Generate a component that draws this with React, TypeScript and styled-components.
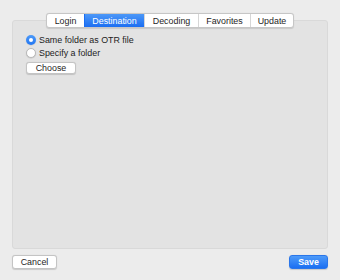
import React from "react";
import styled, { createGlobalStyle } from "styled-components";

const Global = createGlobalStyle`
  html, body { margin: 0; padding: 0; background: #ececec; }
  * { box-sizing: border-box; }
  body { font-family: "Liberation Sans", Arial, sans-serif; }
`;

const Window = styled.div`
  width: 340px;
  height: 280px;
  padding: 0 12px;
  display: flex;
  flex-direction: column;
  background: #ececec;
  color: #1d1d1d;
  font-size: 8.9px;
`;

const Panel = styled.div`
  margin-top: 20px;
  height: 229px;
  border: 1px solid #d9d9d9;
  border-radius: 3px;
  background: #e3e3e3;
  display: flex;
  flex-direction: column;
`;

const TabBar = styled.div`
  align-self: center;
  margin-top: -8px;
  height: 15px;
  display: flex;
  border: 1px solid #c6c6c6;
  border-radius: 3px;
  background: #ffffff;
  box-shadow: 0 0.5px 1px rgba(0, 0, 0, 0.12);
  overflow: hidden;
`;

const Tab = styled.div<{ $w: number; $active?: boolean }>`
  width: ${(p) => p.$w}px;
  display: flex;
  align-items: center;
  justify-content: center;
  color: ${(p) => (p.$active ? "#ffffff" : "#262626")};
  background: ${(p) =>
    p.$active ? "linear-gradient(#4c98f8, #1b6ef2)" : "transparent"};
  border-left: 1px solid ${(p) => (p.$active ? "#1b6ef2" : "#d6d6d6")};
  &:first-child { border-left: none; }
`;

const Content = styled.div`
  padding: 5px 0 0 13px;
  display: flex;
  flex-direction: column;
`;

const RadioRow = styled.div`
  height: 13.5px;
  display: flex;
  align-items: center;
  gap: 3px;
`;

const RadioDot = styled.span<{ $on?: boolean }>`
  width: 10px;
  height: 10px;
  border-radius: 50%;
  display: flex;
  align-items: center;
  justify-content: center;
  background: ${(p) => (p.$on ? "linear-gradient(#4d9af8, #2176f3)" : "#ffffff")};
  border: ${(p) => (p.$on ? "none" : "0.5px solid #b9b9b9")};
  box-shadow: 0 0.5px 1px rgba(0, 0, 0, 0.15);
  &::after {
    content: "";
    display: ${(p) => (p.$on ? "block" : "none")};
    width: 4px;
    height: 4px;
    border-radius: 50%;
    background: #ffffff;
  }
`;

const Button = styled.div<{ $w: number; $h: number; $primary?: boolean }>`
  width: ${(p) => p.$w}px;
  height: ${(p) => p.$h}px;
  display: flex;
  align-items: center;
  justify-content: center;
  border-radius: 3px;
  background: ${(p) => (p.$primary ? "linear-gradient(#4e9bf9, #1b6ff2)" : "#ffffff")};
  color: ${(p) => (p.$primary ? "#ffffff" : "#262626")};
  border: ${(p) => (p.$primary ? "0.5px solid #2a76ea" : "0.5px solid #c4c4c4")};
  box-shadow: 0 0.5px 1px rgba(0, 0, 0, 0.15);
  font-weight: ${(p) => (p.$primary ? 600 : 400)};
`;

const ChooseWrap = styled.div`
  margin-top: 2px;
`;

const Footer = styled.div`
  margin-top: 6px;
  display: flex;
  justify-content: space-between;
`;

const tabs: [string, number][] = [
  ["Login", 37],
  ["Destination", 60],
  ["Decoding", 54],
  ["Favorites", 52],
  ["Update", 43],
];

export default function App() {
  return (
    <>
      <Global />
      <Window>
        <Panel>
          <TabBar>
            {tabs.map(([t, w]) => (
              <Tab key={t} $w={w} $active={t === "Destination"}>
                {t}
              </Tab>
            ))}
          </TabBar>
          <Content>
            <RadioRow>
              <RadioDot $on />
              Same folder as OTR file
            </RadioRow>
            <RadioRow>
              <RadioDot />
              Specify a folder
            </RadioRow>
            <ChooseWrap>
              <Button $w={50} $h={12}>Choose</Button>
            </ChooseWrap>
          </Content>
        </Panel>
        <Footer>
          <Button $w={45} $h={14}>Cancel</Button>
          <Button $w={39} $h={14} $primary>Save</Button>
        </Footer>
      </Window>
    </>
  );
}
